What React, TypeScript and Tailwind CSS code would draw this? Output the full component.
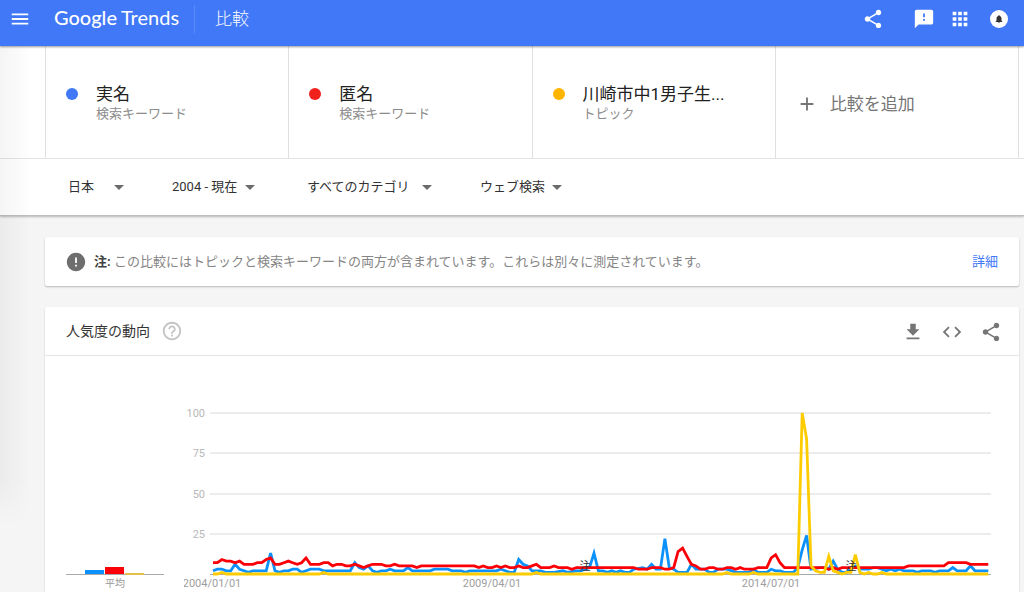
import {
  MdAdd,
  MdApps,
  MdArrowDropDown,
  MdCode,
  MdError,
  MdFeedback,
  MdFileDownload,
  MdHelpOutline,
  MdMenu,
  MdNotifications,
  MdShare,
} from 'react-icons/md'

type Point = [month: number, value: number]

const terms = [
  { name: '実名', kind: '検索キーワード', dot: 'bg-[#4178f7]' },
  { name: '匿名', kind: '検索キーワード', dot: 'bg-[#f0201c]' },
  { name: '川崎市中1男子生...', kind: 'トピック', dot: 'bg-[#ffb400]' },
]

const filters = [
  { label: '地域', value: '日本', size: 'w-[57px] mr-[47px]' },
  { label: '期間', value: '2004 - 現在', size: 'w-[84px] mr-[51px]' },
  { label: 'カテゴリ', value: 'すべてのカテゴリ', size: 'w-[126px] mr-[47px]' },
  { label: '検索の種類', value: 'ウェブ検索', size: 'w-[83px]' },
]

// months since 2004/01, interest 0-100
const blue: Point[] = [
  [0, 2], [1, 3], [2, 3], [3, 2], [4, 2], [5, 6], [6, 3], [7, 2], [8, 1], [9, 2], [12, 2], [13, 13],
  [14, 2], [15, 1], [16, 2], [17, 2], [18, 3], [19, 3], [20, 1], [21, 2], [22, 3], [24, 3], [25, 2],
  [31, 2], [32, 7], [33, 4], [34, 3], [35, 5], [36, 2], [37, 1], [38, 2], [39, 2], [40, 3], [41, 2],
  [43, 2], [44, 4], [45, 2], [49, 2], [50, 3], [53, 3], [54, 2], [56, 2], [57, 1], [58, 2], [64, 2],
  [65, 3], [66, 2], [67, 1], [68, 1], [69, 9], [70, 6], [71, 5], [72, 2], [74, 2], [75, 1], [77, 1],
  [79, 2], [80, 1], [82, 2], [83, 2], [84, 3], [85, 4], [86, 13], [87, 2], [88, 2], [89, 1], [90, 2],
  [91, 1], [92, 2], [93, 1], [94, 1], [95, 3], [97, 4], [98, 3], [99, 6], [100, 3], [101, 3],
  [102, 22], [103, 4], [104, 3], [105, 1], [107, 1], [108, 6], [109, 3], [111, 3], [112, 1], [113, 1],
  [114, 3], [116, 3], [118, 1], [121, 1], [122, 3], [123, 1], [125, 1], [126, 3], [127, 2], [128, 2],
  [129, 1], [131, 1], [132, 4], [133, 15], [134, 24], [135, 3], [137, 4], [138, 4], [139, 3],
  [140, 8], [141, 3], [142, 1], [143, 1], [144, 3], [145, 5], [146, 3], [148, 3], [149, 4], [150, 4],
  [152, 2], [153, 3], [154, 2], [155, 3], [156, 2], [158, 2], [159, 1], [160, 2], [162, 2], [163, 1],
  [164, 2], [166, 2], [167, 4], [168, 2], [170, 2], [171, 5], [172, 2], [175, 2],
]

const red: Point[] = [
  [0, 7], [1, 7], [2, 9], [3, 8], [4, 8], [5, 7], [6, 8], [7, 6], [9, 6], [10, 7], [11, 7], [12, 9],
  [13, 10], [14, 6], [15, 6], [16, 7], [17, 8], [18, 7], [19, 6], [20, 7], [21, 10], [22, 6], [24, 6],
  [25, 7], [26, 7], [27, 5], [28, 6], [29, 6], [30, 5], [31, 5], [32, 6], [33, 5], [34, 4], [35, 5],
  [36, 6], [38, 6], [39, 5], [40, 5], [41, 6], [42, 5], [45, 5], [46, 4], [47, 5], [59, 5], [60, 4],
  [61, 5], [62, 4], [63, 4], [64, 5], [65, 4], [66, 5], [67, 4], [68, 4], [69, 5], [70, 4], [71, 4],
  [72, 5], [73, 6], [74, 4], [76, 4], [77, 5], [78, 4], [80, 4], [81, 3], [82, 4], [95, 4], [96, 3],
  [98, 3], [99, 4], [101, 4], [102, 3], [103, 3], [104, 4], [105, 14], [106, 16], [107, 11], [108, 6],
  [109, 5], [110, 3], [111, 3], [112, 4], [113, 4], [114, 3], [115, 3], [116, 4], [117, 4], [118, 3],
  [119, 4], [120, 3], [122, 3], [123, 4], [125, 4], [126, 10], [127, 12], [128, 7], [129, 4],
  [138, 4], [139, 3], [140, 4], [141, 3], [142, 4], [156, 4], [157, 5], [165, 5], [166, 7], [170, 7],
  [171, 6], [175, 6],
]

const yellow: Point[] = [
  [0, 0], [1, 0], [2, 1], [3, 0], [24, 0], [25, 1], [26, 0], [72, 0], [73, 1], [74, 0], [115, 0],
  [116, 1], [117, 0], [121, 0], [122, 1], [123, 0], [132, 0], [133, 100], [134, 84], [135, 5],
  [136, 2], [137, 1], [138, 1], [139, 11], [140, 2], [141, 1], [142, 0], [143, 1], [144, 1],
  [145, 12], [146, 1], [147, 0], [148, 1], [149, 0], [150, 0], [151, 1], [152, 0], [175, 0],
]

const series = [
  { color: '#0c91fb', points: blue },
  { color: '#fb0007', points: red },
  { color: '#fdcc00', points: yellow },
]

const BASE = 174
const px = (month: number) => 29 + month * 4.43
const py = (value: number) => BASE - value * 1.61
const toPoints = (points: Point[]) => points.map(([m, v]) => `${px(m).toFixed(1)},${py(v).toFixed(1)}`).join(' ')

const gridLines = [
  { value: 100, y: 13 },
  { value: 75, y: 53 },
  { value: 50, y: 94 },
  { value: 25, y: 134 },
]

function Header() {
  return (
    <header className="relative z-10 flex h-[46px] shrink-0 items-center bg-[#4178f7] pl-[9px] pr-4 pb-2 text-white shadow-[0_1px_2px_rgba(0,0,0,0.4)]">
      <button aria-label="メニュー">
        <MdMenu size={22} />
      </button>
      <a href="#" className="ml-[23px] flex gap-1 pb-1 font-['Lato'] text-[20px] leading-6">
        <span className="font-medium">Google</span>
        <span>Trends</span>
      </a>
      <div className="ml-[15px] h-7 w-px bg-[#5c8bf8]" />
      <h1 className="ml-5 flex-1 text-[17px] leading-6 font-light">比較</h1>
      <button aria-label="共有" className="mr-[29px]">
        <MdShare size={22} />
      </button>
      <button aria-label="フィードバック" className="mr-[14px]">
        <MdFeedback size={22} />
      </button>
      <button aria-label="アプリ" className="mr-[19px]">
        <MdApps size={22} />
      </button>
      <button aria-label="通知" className="grid size-[18px] place-items-center rounded-full bg-white text-[#333]">
        <MdNotifications size={10} />
      </button>
    </header>
  )
}

function Terms() {
  return (
    <section className="ml-[45px] mr-[5px] grid h-[112px] grid-cols-4 border-r border-[#e0e0e0]">
      {terms.map((term) => (
        <div key={term.name} className="flex border-l border-[#e0e0e0] pt-9 pl-5">
          <span className={`mt-1.5 size-3 shrink-0 rounded-full ${term.dot}`} />
          <div className="ml-[18px] whitespace-nowrap">
            <p className="text-[17px] leading-6 text-[#212121]">{term.name}</p>
            <p className="text-[13px] leading-4 text-[#8c8c8c]">{term.kind}</p>
          </div>
        </div>
      ))}
      <button className="flex items-center border-l border-[#e0e0e0] pt-1 pl-5 text-[#757575]">
        <MdAdd size={22} />
        <span className="ml-3 text-[17px] leading-6">比較を追加</span>
      </button>
    </section>
  )
}

function Filters() {
  return (
    <section className="flex h-[57px] items-center border-t border-[#e4e4e4] pl-[68px]">
      {filters.map((filter) => (
        <div key={filter.label} className={`grid items-center ${filter.size}`}>
          <select
            aria-label={filter.label}
            className="col-start-1 row-start-1 w-full appearance-none bg-transparent text-[13px] leading-6 text-[#333]"
          >
            <option>{filter.value}</option>
          </select>
          <MdArrowDropDown
            size={24}
            className="pointer-events-none col-start-1 row-start-1 -mr-1.5 justify-self-end text-[#6b6b6b]"
          />
        </div>
      ))}
    </section>
  )
}

function Averages() {
  return (
    <svg viewBox="0 0 98 192" className="w-[98px] shrink-0" role="img" aria-label="平均">
      <path d="M0 174.5H98" stroke="#a8a8a8" />
      <rect x="19" y="170" width="19" height="4" fill="#0c91fb" />
      <rect x="39" y="167" width="19" height="7" fill="#fb0007" />
      <rect x="59" y="173" width="19" height="2" fill="#e3c04a" />
      <text x="49" y="187" textAnchor="middle" fontSize="10" fill="#999">平均</text>
    </svg>
  )
}

function TrendChart() {
  return (
    <svg viewBox="0 0 807 192" className="min-w-0 flex-1" role="img" aria-label="人気度の動向">
      {gridLines.map((line) => (
        <g key={line.value}>
          <path d={`M26 ${line.y}H807`} stroke="#e6e6e6" strokeWidth="1.4" />
          <text x="21" y={line.y + 4} textAnchor="end" fontSize="11" fill="#b8b8b8">{line.value}</text>
        </g>
      ))}
      <path d="M26 174.5H807" stroke="#a8a8a8" />
      {series.map((s) => (
        <polyline key={s.color} points={toPoints(s.points)} fill="none" stroke={s.color} strokeWidth="2.8" />
      ))}
      <g fontSize="11" fill="#9e9e9e" textAnchor="middle">
        <text x="28" y="187">2004/01/01</text>
        <text x="308" y="187">2009/04/01</text>
        <text x="587" y="187">2014/07/01</text>
      </g>
      <g fontSize="11" fill="#333" textAnchor="middle">
        <text x="401" y="170">注</text>
        <text x="667" y="170">注</text>
      </g>
    </svg>
  )
}

export default function App() {
  return (
    <div className="relative flex h-screen flex-col overflow-hidden bg-[#f5f5f5] font-['Roboto','Noto_Sans_CJK_JP',sans-serif]">
      <Header />
      <div className="shrink-0 border-b border-[#bdbdbd] bg-white shadow-[0_1px_2px_rgba(0,0,0,0.25)]">
        <Terms />
        <Filters />
      </div>

      <main className="ml-[45px] mr-[5px] flex flex-1 flex-col gap-[21px] pt-[21px]">
        <section className="flex h-[49px] shrink-0 items-center rounded-xs bg-white pl-5 pr-[21px] text-[13px] leading-5 shadow-[0_1px_2px_rgba(0,0,0,0.25)]">
          <MdError size={22} className="shrink-0 text-[#6e6e6e]" />
          <p className="ml-[7px] flex-1 text-[#858585]">
            <strong className="font-bold text-[#424242]">注:</strong>{' '}
            この比較にはトピックと検索キーワードの両方が含まれています。これらは別々に測定されています。
          </p>
          <a href="#" className="text-[#4178f7]">詳細</a>
        </section>

        <section className="flex-1 rounded-t-xs bg-white shadow-[0_1px_2px_rgba(0,0,0,0.2)]">
          <div className="flex h-[49px] items-center border-b border-[#e4e4e4] pl-[21px] pr-[17px] text-[#757575]">
            <h2 className="text-[14px] leading-5 text-[#333]">人気度の動向</h2>
            <button aria-label="ヘルプ" className="ml-[11px] text-[#c4c4c4]">
              <MdHelpOutline size={22} />
            </button>
            <div className="ml-auto flex gap-[17px] pt-0.5">
              <button aria-label="ダウンロード">
                <MdFileDownload size={22} />
              </button>
              <button aria-label="埋め込み">
                <MdCode size={22} />
              </button>
              <button aria-label="共有">
                <MdShare size={22} />
              </button>
            </div>
          </div>
          <div className="flex items-start gap-5 pt-11 pl-[21px] pr-7">
            <Averages />
            <TrendChart />
          </div>
        </section>
      </main>

      {/* shadow cast by the collapsed side drawer */}
      <div className="pointer-events-none absolute top-[46px] left-0 h-[480px] w-8 bg-linear-to-r from-black/4 to-transparent mask-b-from-90%" />
    </div>
  )
}
